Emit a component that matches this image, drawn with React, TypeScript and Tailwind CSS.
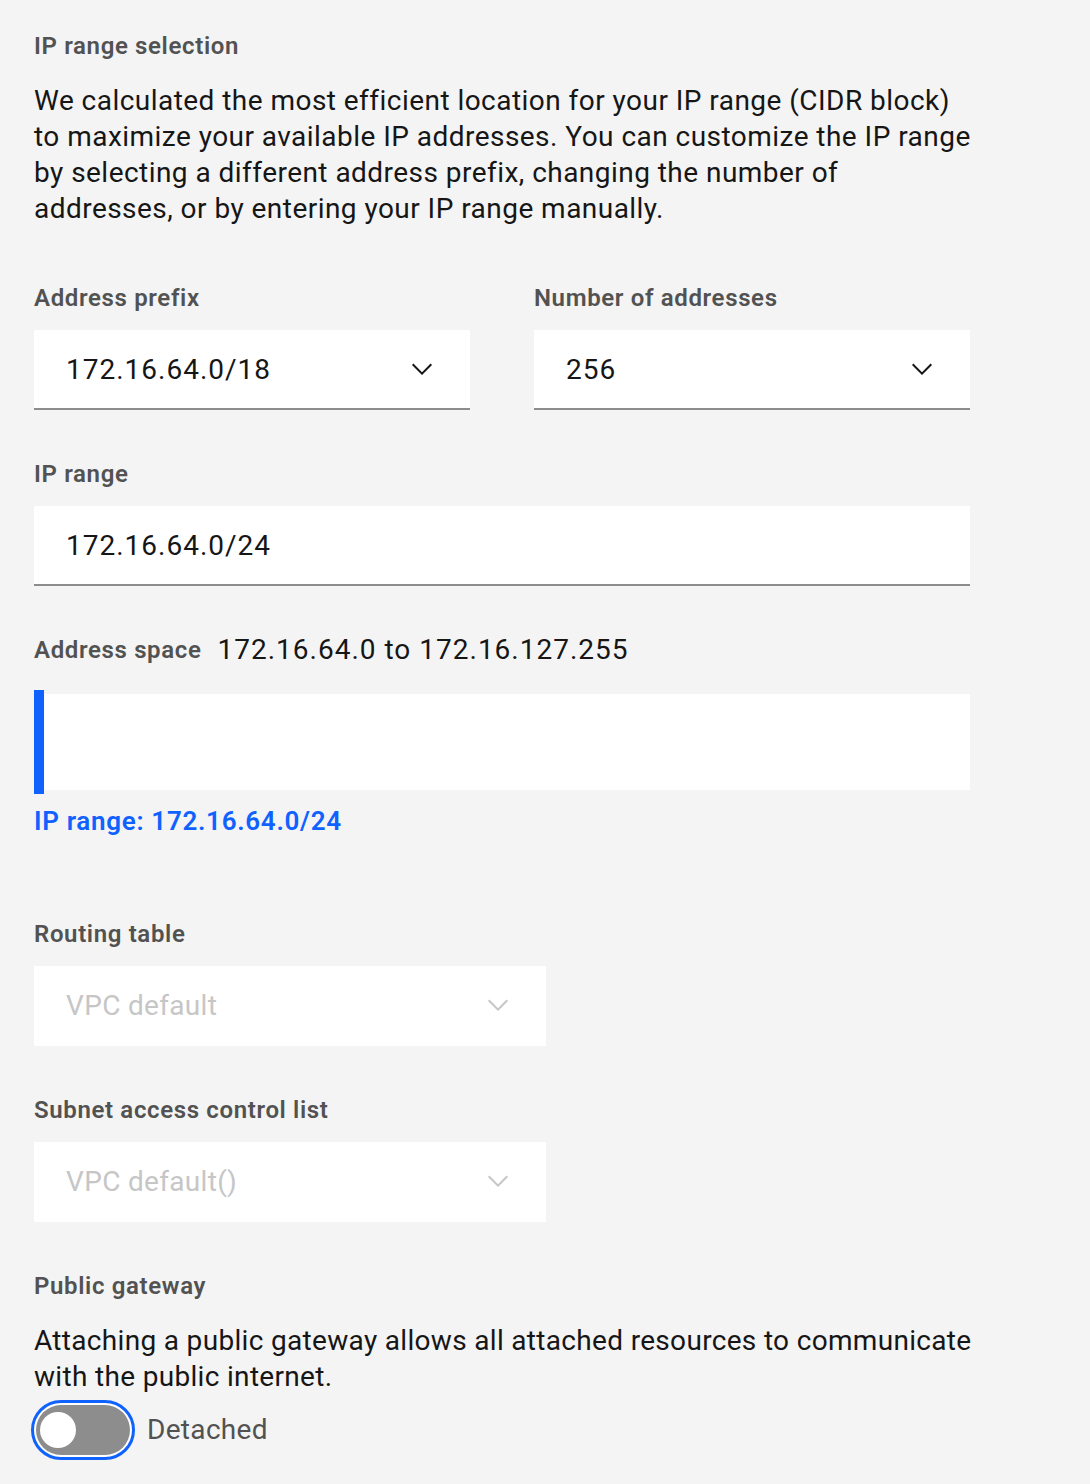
import React from 'react';

const font = { fontFamily: 'Roboto, "Noto Sans", "Liberation Sans", sans-serif' };

const Chevron = ({ color }: { color: string }) => (
  <svg width="32" height="32" viewBox="0 0 16 16" fill={color} aria-hidden="true">
    <path d="M8 11L3 6 3.7 5.3 8 9.6 12.3 5.3 13 6z" />
  </svg>
);

const Label = ({ children, className = '' }: { children: React.ReactNode; className?: string }) => (
  <div className={`text-[24px] leading-[32px] font-semibold tracking-[0.64px] text-[#525252] ${className}`}>
    {children}
  </div>
);

const Select = ({ value, disabled = false, width }: { value: string; disabled?: boolean; width: string }) => (
  <div
    className={`${width} h-[80px] bg-white flex items-center justify-between pl-[32px] pr-[32px] border-b-2 ${
      disabled ? 'border-transparent text-[#c6c6c6]' : 'border-[#8d8d8d] text-[#161616]'
    }`}
  >
    <span className={`text-[28px] leading-[36px] pt-[2px] ${disabled ? 'tracking-[0.32px]' : 'tracking-[1px]'}`}>
      {value}
    </span>
    <Chevron color={disabled ? '#c6c6c6' : '#161616'} />
  </div>
);

const App = () => {
  return (
    <div style={font} className="w-[1090px] min-h-[1484px] bg-[#f4f4f4] pl-[34px] pt-[30px] text-[#161616]">
      <Label>IP range selection</Label>
      <p className="mt-[21px] w-[1000px] text-[28px] leading-[36px] tracking-[0.46px]">
        We calculated the most efficient location for your IP range (CIDR block)
        <br />
        to maximize your available IP addresses. You can customize the IP range
        <br />
        by selecting a different address prefix, changing the number of
        <br />
        addresses, or by entering your IP range manually.
      </p>

      <div className="mt-[55px] flex gap-[64px]">
        <div>
          <Label>Address prefix</Label>
          <div className="mt-[16px]">
            <Select value="172.16.64.0/18" width="w-[436px]" />
          </div>
        </div>
        <div>
          <Label>Number of addresses</Label>
          <div className="mt-[16px]">
            <Select value="256" width="w-[436px]" />
          </div>
        </div>
      </div>

      <Label className="mt-[48px]">IP range</Label>
      <div className="mt-[16px] w-[936px] h-[80px] bg-white border-b-2 border-[#8d8d8d] flex items-center pl-[32px]">
        <span className="text-[28px] leading-[36px] pt-[2px] tracking-[1px]">172.16.64.0/24</span>
      </div>

      <div className="mt-[48px] flex items-center gap-[16px] h-[32px]">
        <Label>Address space</Label>
        <span className="text-[28px] leading-[32px] tracking-[1px]">172.16.64.0 to 172.16.127.255</span>
      </div>

      <div className="mt-[24px] w-[936px] h-[104px] flex items-center">
        <div className="w-[10px] h-[104px] bg-[#0f62fe]" />
        <div className="flex-1 h-[96px] bg-white" />
      </div>

      <div className="mt-[11px] text-[26px] leading-[32px] font-semibold tracking-[0.7px] text-[#0f62fe]">
        IP range: 172.16.64.0/24
      </div>

      <Label className="mt-[81px]">Routing table</Label>
      <div className="mt-[16px]">
        <Select value="VPC default" disabled width="w-[512px]" />
      </div>

      <Label className="mt-[48px]">Subnet access control list</Label>
      <div className="mt-[16px]">
        <Select value="VPC default()" disabled width="w-[512px]" />
      </div>

      <Label className="mt-[48px]">Public gateway</Label>
      <p className="mt-[21px] w-[1000px] text-[28px] leading-[36px] tracking-[0.32px]">
        Attaching a public gateway allows all attached resources to communicate
        <br />
        with the public internet.
      </p>

      <div className="mt-[5px] -ml-[3px] flex items-center gap-[12px]">
        <div className="w-[104px] h-[60px] rounded-full border-[3px] border-[#0f62fe] p-[2px] bg-white">
          <div className="w-full h-full rounded-full bg-[#8d8d8d] flex items-center pl-[4px]">
            <div className="w-[36px] h-[36px] rounded-full bg-white" />
          </div>
        </div>
        <span className="text-[28px] leading-[36px] tracking-[0.32px] text-[#525252]">Detached</span>
      </div>
    </div>
  );
};

export default App;
